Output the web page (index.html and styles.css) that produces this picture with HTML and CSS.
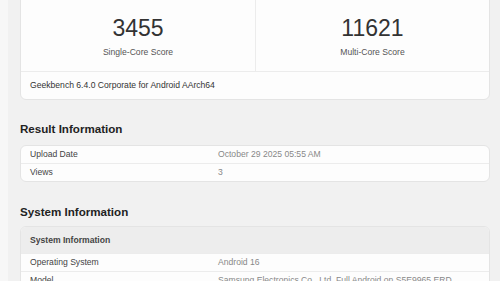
FILE: index.html
```html
<!DOCTYPE html>
<html>
<head>
<meta charset="utf-8">
<link rel="stylesheet" href="styles.css">
</head>
<body>
<div class="page">
  <div class="card score-card">
    <div class="scores">
      <div class="score">
        <div class="score-value">3455</div>
        <div class="score-label">Single-Core Score</div>
      </div>
      <div class="score">
        <div class="score-value">11621</div>
        <div class="score-label">Multi-Core Score</div>
      </div>
    </div>
    <div class="score-foot">Geekbench 6.4.0 Corporate for Android AArch64</div>
  </div>

  <h2 class="section-title first">Result Information</h2>
  <div class="card table">
    <div class="row"><div class="key">Upload Date</div><div class="val">October 29 2025 05:55 AM</div></div>
    <div class="row"><div class="key">Views</div><div class="val">3</div></div>
  </div>

  <h2 class="section-title">System Information</h2>
  <div class="card table">
    <div class="row head"><div class="key">System Information</div></div>
    <div class="row"><div class="key">Operating System</div><div class="val">Android 16</div></div>
    <div class="row"><div class="key">Model</div><div class="val">Samsung Electronics Co., Ltd. Full Android on S5E9965 ERD</div></div>
  </div>
</div>
</body>
</html>
```

FILE: styles.css
```css
html, body {
  margin: 0;
  padding: 0;
}
body {
  background: #f7f7f7;
  font-family: "Liberation Sans", Arial, sans-serif;
  color: #333;
  overflow: hidden;
  height: 281px;
}
.page {
  margin-left: 8px;
  background: #f1f1f1;
  padding: 0 10px 20px 12px;
  min-height: 300px;
}
.card {
  background: #fdfdfd;
  border: 1px solid #e4e4e4;
  border-radius: 6px;
  overflow: hidden;
}
.score-card {
  margin-top: -10px;
}
.scores {
  display: grid;
  grid-template-columns: 1fr 1fr;
  border-bottom: 1px solid #ececec;
}
.score {
  text-align: center;
  padding: 24px 0 13px;
}
.score + .score {
  border-left: 1px solid #ececec;
}
.score-value {
  font-size: 23px;
  line-height: 26px;
  color: #333;
}
.score-label {
  margin-top: 5px;
  font-size: 8.6px;
  line-height: 12px;
  color: #555;
}
.score-foot {
  height: 27px;
  line-height: 27px;
  padding-left: 9px;
  font-size: 8.6px;
  color: #333;
}
.section-title {
  margin: 23px 0 7px;
  font-size: 11.6px;
  line-height: 14px;
  font-weight: bold;
  color: #222;
}
.section-title.first {
  margin: 22px 0 9px;
}
.row {
  display: grid;
  grid-template-columns: 188px 1fr;
  padding-left: 9px;
  height: 17px;
  line-height: 17px;
  font-size: 8.6px;
  white-space: nowrap;
}
.row + .row {
  border-top: 1px solid #ececec;
}
.row.head {
  background: #ededed;
  height: 26px;
  line-height: 26px;
  font-weight: bold;
  color: #333;
}
.key {
  color: #444;
}
.val {
  color: #888;
}
```
